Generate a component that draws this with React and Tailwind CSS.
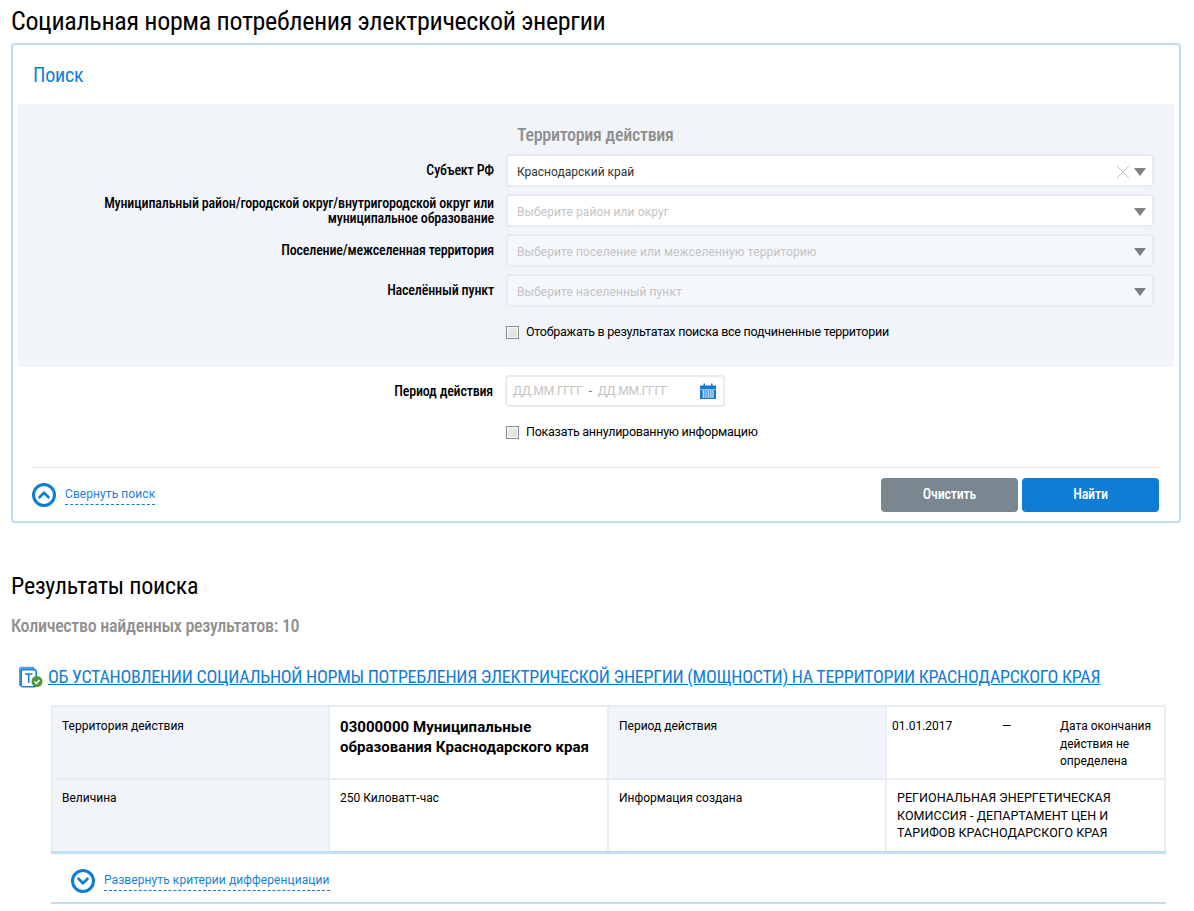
import { ChevronUp, ChevronDown } from "lucide-react";

const cond = "font-['Roboto'] font-stretch-[75%]";

const Caret = () => (
  <span className="w-0 h-0 border-l-[6px] border-r-[6px] border-t-[8px] border-l-transparent border-r-transparent border-t-[#7f7f7f]"></span>
);

const Select = ({ label, value, placeholder, disabled, clear }) => (
  <div className="flex items-center h-[33px] mb-[7px]">
    <label className={`w-[476px] pl-[60px] text-right text-[14px] leading-[15px] font-medium tracking-[-0.17px] text-black ${cond}`}>
      {label}
    </label>
    <div
      className={`ml-3 w-[648px] h-[33px] flex items-center rounded border-2 border-[#e8ebef] pl-[9px] pr-[6px] ${
        disabled ? "bg-[#f4f7fb]" : "bg-white"
      }`}
    >
      <span className={`flex-1 text-[12px] pt-[2px] ${value ? "text-[#333333]" : "text-[#c4c4c4] tracking-[0.1px]"}`}>
        {value || placeholder}
      </span>
      {clear && (
        <svg width="14" height="14" viewBox="0 0 14 14" className="mr-1 mt-[2px]">
          <path d="M1 1L13 13M13 1L1 13" stroke="#b9c6d2" strokeWidth="1" fill="none" />
        </svg>
      )}
      <span className="flex pt-[2px]">
        <Caret />
      </span>
    </div>
  </div>
);

const Check = ({ label, className }) => (
  <div className={`flex items-center ${className}`}>
    <span className="w-[13px] h-[13px] border border-[#8a8a8a] bg-gradient-to-br from-[#eeeeee] to-[#dddddd] shadow-[inset_0_0_0_1px_#ffffff]"></span>
    <span className="ml-[7px] text-[12.5px] tracking-[-0.25px] font-[450] text-black">{label}</span>
  </div>
);

const Toggle = ({ up, label, className }) => (
  <div className={`flex items-center ${className}`}>
    <span className="w-6 h-6 rounded-full border-[3px] border-[#0f7dd6] flex items-center justify-center">
      {up ? (
        <ChevronUp size={18} strokeWidth={3.5} className="text-[#0f7dd6]" />
      ) : (
        <ChevronDown size={18} strokeWidth={3.5} className="text-[#0f7dd6]" />
      )}
    </span>
    <span className="ml-[9px] text-[12px] leading-[15px] tracking-[0.08px] text-[#1a7fd6] border-b border-dashed border-[#0f7dd6] pb-[2px] mt-[2px]">
      {label}
    </span>
  </div>
);

const Cell = ({ gray, className, children }) => (
  <div className={`border-r-2 border-[#e8edf2] text-black ${gray ? "bg-[#f1f4f8]" : "bg-white"} ${className}`}>
    {children}
  </div>
);

const plain = "text-[12px] leading-[17.5px]";

export default function App() {
  return (
    <div className="h-[911px] overflow-hidden bg-white font-['Roboto',sans-serif] px-[11px]">
      <h1 className={`pt-[5px] pb-[1px] text-[26px] leading-[32px] font-[450] tracking-[-0.34px] text-black ${cond}`}>
        Социальная норма потребления электрической энергии
      </h1>

      <div className="mt-[5px] w-[1170px] h-[480px] border-2 border-[#c2def5] rounded px-[5px]">
        <h2 className={`pl-[15px] pt-[18px] h-[59px] text-[20px] leading-[24px] font-[450] tracking-[-0.25px] text-[#0f7dd6] ${cond}`}>
          Поиск
        </h2>

        <div className="bg-[#f1f4f8] h-[263px] pt-[19px]">
          <div className={`pl-[499px] text-[18px] leading-[24px] font-medium tracking-[-0.3px] text-[#8e8e8e] mb-[7px] ${cond}`}>
            Территория действия
          </div>
          <Select label="Субъект РФ" value="Краснодарский край" clear />
          <Select
            label="Муниципальный район/городской округ/внутригородской округ или муниципальное образование"
            placeholder="Выберите район или округ"
          />
          <Select label="Поселение/межселенная территория" placeholder="Выберите поселение или межселенную территорию" disabled />
          <Select label="Населённый пункт" placeholder="Выберите населенный пункт" disabled />
          <Check label="Отображать в результатах поиска все подчиненные территории" className="ml-[488px] mt-[16px]" />
        </div>

        <div className="flex items-center h-8 mt-2">
          <label className={`w-[475px] text-right text-[14px] font-medium tracking-[-0.2px] text-black ${cond}`}>Период действия</label>
          <div className="ml-3 w-[220px] h-8 flex items-center rounded border-2 border-[#e8ebef] bg-white pl-[6px] text-[12px] tracking-[-0.25px] text-[#c4c4c4]">
            <span>ДД.ММ.ГГГГ</span>
            <span className="mx-[6px] text-[#777777]">-</span>
            <span>ДД.ММ.ГГГГ</span>
            <svg width="16" height="16" viewBox="0 0 16 16" className="ml-auto mr-[7px]">
              <path d="M0 2.5H3.5V0.5H5V2.5H11V0.5H12.5V2.5H16V6H0Z" fill="#1279d6" />
              <path d="M0 6.5H16V16H0Z" fill="#1279d6" />
              <path d="M2 8H14M2 10H14M2 12H14M2 14H14M3.5 7V15M6 7V15M8.5 7V15M11 7V15M13 7V15" stroke="#cfe4f7" strokeWidth="0.8" />
            </svg>
          </div>
        </div>

        <Check label="Показать аннулированную информацию" className="ml-[488px] mt-[16px]" />

        <div className="mx-[14px] mt-[25px] border-t border-[#e3e5e7] flex items-center justify-between pt-[10px]">
          <Toggle up label="Свернуть поиск" className="pt-[1px]" />
          <div className="flex gap-1 mr-[1px]">
            <button className={`w-[137px] h-[34px] rounded bg-[#7a8791] text-white text-[14px] font-medium tracking-[-0.2px] ${cond}`}>Очистить</button>
            <button className={`w-[137px] h-[34px] rounded bg-[#0f7dd6] text-white text-[14px] font-medium tracking-[-0.2px] ${cond}`}>Найти</button>
          </div>
        </div>
      </div>

      <h2 className={`mt-[49px] text-[24px] leading-[28px] font-[450] tracking-[-0.25px] text-black ${cond}`}>Результаты поиска</h2>
      <div className={`mt-[14px] text-[18px] leading-[24px] font-medium tracking-[-0.3px] text-[#8e8e8e] ${cond}`}>
        Количество найденных результатов: 10
      </div>

      <div className="flex items-center ml-[7px] mt-[27px] h-[24px]">
        <svg width="25" height="22" viewBox="0 0 25 22">
          <path d="M5 0.8H15C16 0.8 16.5 1.3 16.5 2.3V4H4.5C3.5 4 3 4.5 3 5.5V20H2.5C1.5 20 1 19.5 1 18.5V3C1 1.5 2 0.8 5 0.8Z" fill="#1a7fd6" opacity="0.75" />
          <rect x="3.2" y="3.8" width="15" height="17" rx="1.5" fill="none" stroke="#1a7fd6" strokeWidth="1.6" />
          <path d="M7 8H14.5M10.7 8V17" stroke="#1a7fd6" strokeWidth="1.6" fill="none" />
          <circle cx="19" cy="15.5" r="5.5" fill="#4f9a3c" />
          <path d="M16.5 15.5L18.4 17.5L21.5 14" stroke="#ffffff" strokeWidth="1.5" fill="none" />
        </svg>
        <a className={`ml-[5px] text-[18px] leading-[24px] tracking-[-0.28px] text-[#0f7dd6] underline ${cond}`}>
          ОБ УСТАНОВЛЕНИИ СОЦИАЛЬНОЙ НОРМЫ ПОТРЕБЛЕНИЯ ЭЛЕКТРИЧЕСКОЙ ЭНЕРГИИ (МОЩНОСТИ) НА ТЕРРИТОРИИ КРАСНОДАРСКОГО КРАЯ
        </a>
      </div>

      <div className="ml-[40px] mt-[16px] w-[1115px]">
        <div className="grid grid-cols-[277px_279px_278px_279px] h-[146px] grid-rows-[73px_71px] border-l-2 border-t-2 border-[#e8edf2]">
          <Cell gray className={`pl-[9px] pt-[11px] border-b-2 ${plain}`}>Территория действия</Cell>
          <Cell className="pl-[10px] pr-2 pt-[10px] border-b-2 text-[15px] leading-[20px] font-bold tracking-[0.05px]">
            03000000 Муниципальные образования Краснодарского края
          </Cell>
          <Cell gray className={`pl-[10px] pt-[11px] border-b-2 ${plain}`}>Период действия</Cell>
          <Cell className={`pl-[5px] pt-[11px] border-b-2 flex ${plain}`}>
            <span className="w-[110px]">01.01.2017</span>
            <span className="w-[58px]">—</span>
            <span className="w-[100px]">Дата окончания действия не определена</span>
          </Cell>
          <Cell gray className={`pl-[9px] pt-[10px] ${plain}`}>Величина</Cell>
          <Cell className={`pl-[10px] pt-[10px] ${plain}`}>250 Киловатт-час</Cell>
          <Cell className={`pl-[10px] pt-[10px] ${plain}`}>Информация создана</Cell>
          <Cell className="pl-[10px] pr-4 pt-[9px] text-[12.5px] leading-[17.5px] tracking-[0.05px]">
            РЕГИОНАЛЬНАЯ ЭНЕРГЕТИЧЕСКАЯ КОМИССИЯ - ДЕПАРТАМЕНТ ЦЕН И ТАРИФОВ КРАСНОДАРСКОГО КРАЯ
          </Cell>
        </div>
        <div className="h-[53px] border-t-[3px] border-b-2 border-[#c2def5] flex items-center pl-[20px] pt-[5px]">
          <Toggle label="Развернуть критерии дифференциации" />
        </div>
      </div>
    </div>
  );
}
